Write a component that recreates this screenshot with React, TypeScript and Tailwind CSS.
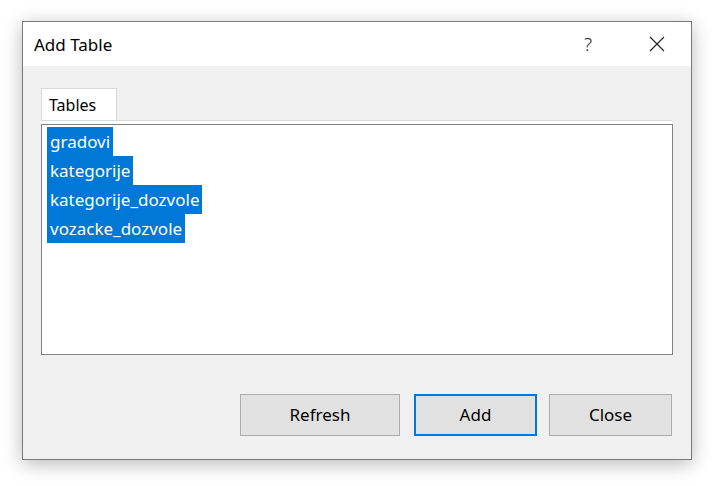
import React from "react";

const items = ["gradovi", "kategorije", "kategorije_dozvole", "vozacke_dozvole"];

export default function App() {
  return (
    <div className="w-[715px] h-[486px] bg-white overflow-hidden" style={{ fontFamily: '"Noto Sans", "Open Sans", sans-serif' }}>
      <div className="ml-[22px] mt-[21px] w-[670px] h-[439px] border border-[#7a7a7a] bg-[#f0f0f0] shadow-[0_4px_18px_rgba(0,0,0,0.28)] flex flex-col">
        <div className="h-[44px] bg-white flex items-center pl-[11px] pr-[26px] text-[#000]">
          <span className="text-[17px] leading-none">Add Table</span>
          <span className="ml-auto text-[19px] font-light leading-none text-[#222]">?</span>
          <svg className="ml-[57px]" width="16" height="16" viewBox="0 0 16 16">
            <path d="M1 1 L15 15 M15 1 L1 15" stroke="#222" strokeWidth="1.1" fill="none" />
          </svg>
        </div>
        <div className="flex-1 flex flex-col pl-[18px] pr-[18px] pt-[22px]">
          <div className="w-[76px] h-[33px] bg-white border border-b-0 border-[#d9d9d9] flex items-center pl-[7px] text-[16px] text-black">
            Tables
          </div>
          <div className="w-[631px] h-[4px] -mt-[1px] bg-white border-t border-[#d9d9d9]" />
          <div className="w-[632px] h-[231px] border border-[#828282] bg-white pl-[5px] pt-[2px] flex flex-col">
            {items.map((t) => (
              <div key={t} className="h-[29px] flex items-center">
                <span className="bg-[#0078d7] text-white text-[17px] h-[29px] leading-[29px] pl-[3px] pr-[3px]">{t}</span>
              </div>
            ))}
          </div>
          <div className="flex mt-[39px] pl-[199px]">
            <button className="w-[160px] h-[42px] bg-[#e1e1e1] border border-[#adadad] text-[17px] text-black">Refresh</button>
            <button className="ml-[14px] w-[123px] h-[42px] bg-[#e1e1e1] border-2 border-[#0078d7] text-[17px] text-black">Add</button>
            <button className="ml-[12px] w-[123px] h-[42px] bg-[#e1e1e1] border border-[#adadad] text-[17px] text-black">Close</button>
          </div>
        </div>
      </div>
    </div>
  );
}
